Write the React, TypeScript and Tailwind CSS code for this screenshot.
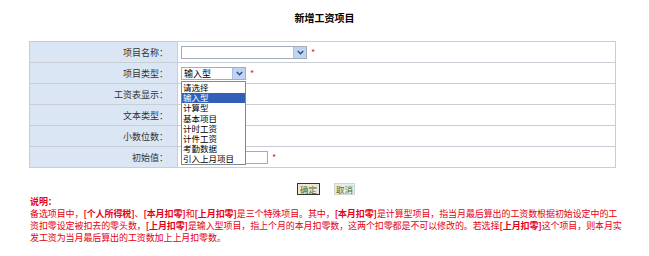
import React from "react";

const rows = ["项目名称：", "项目类型：", "工资表显示：", "文本类型：", "小数位数：", "初始值："];

const options = ["请选择", "输入型", "计算型", "基本项目", "计时工资", "计件工资", "考勤数据", "引入上月项目"];

const Arrow = () => (
  <div className="flex h-full w-[13px] items-center justify-center border-l border-[#a9bfe6] bg-[#c2d3f2]">
    <svg width="7" height="5" viewBox="0 0 7 5">
      <path d="M0.8 1 L3.5 3.8 L6.2 1" fill="none" stroke="#2b4c8c" strokeWidth="1.4" />
    </svg>
  </div>
);

const Star = () => <span className="ml-[4px] text-[9px] leading-none text-[#e8232a]">*</span>;

const App: React.FC = () => {
  return (
    <div
      className="relative h-[256px] w-[649px] overflow-hidden bg-white text-[9px] text-[#333]"
      style={{ fontFamily: '"Noto Sans CJK SC", "Noto Sans", sans-serif' }}
    >
      {/* 标题 */}
      <div className="flex h-[41px] items-start justify-center pt-[12px] text-[10px] font-bold leading-[12px] text-black">
        新增工资项目
      </div>

      {/* 表单 */}
      <div className="ml-[29px] w-[587px] border-t border-[#c9ced6]">
        {rows.map((label, i) => (
          <div key={label} className="flex h-[21px] border-x border-b border-[#c9ced6]">
            <div className="flex w-[148px] items-center justify-end border-r border-[#c9ced6] bg-[#dbe6f5] pr-[9px] leading-none">
              {label}
            </div>
            <div className="relative flex flex-1 items-center pl-[3px]">
              {i === 0 && (
                <>
                  <div className="flex h-[13px] w-[126px] items-stretch justify-end border border-[#a5acb5] bg-white">
                    <Arrow />
                  </div>
                  <Star />
                </>
              )}
              {i === 1 && (
                <>
                  <div className="flex h-[13px] w-[65px] items-stretch border border-[#a5acb5] bg-white">
                    <span className="flex flex-1 items-center pl-[2px] leading-none text-black">输入型</span>
                    <Arrow />
                  </div>
                  <Star />
                  {/* 下拉列表 */}
                  <div className="absolute left-[3px] top-[18px] z-10 flex w-[65px] flex-col border border-[#7f8a99] bg-white py-[0.5px]">
                    {options.map((o) => (
                      <div
                        key={o}
                        className={
                          o === "输入型"
                            ? "flex h-[10.1px] items-center overflow-hidden bg-[#3160b8] pl-[1px] text-[8.5px] leading-none text-white"
                            : "flex h-[10.1px] items-center overflow-hidden pl-[1px] text-[8.5px] leading-none text-black"
                        }
                      >
                        {o}
                      </div>
                    ))}
                  </div>
                </>
              )}
              {i === 5 && (
                <>
                  <div className="h-[13px] w-[87px] border border-[#a5acb5] bg-white" />
                  <Star />
                </>
              )}
            </div>
          </div>
        ))}
      </div>

      {/* 按钮 */}
      <div className="mt-[15px] flex justify-center gap-[14px] pl-[3px]">
        <button className="flex h-[12px] w-[23px] items-center justify-center border border-[#333] bg-[#e9e8dc] text-[8.5px] leading-none text-[#4d6b1e]">
          确定
        </button>
        <button className="flex h-[12px] w-[21px] items-center justify-center border border-[#d4d4cc] bg-[#ecebe2] text-[8.5px] leading-none text-[#4d6b1e]">
          取消
        </button>
      </div>

      {/* 说明 */}
      <div className="ml-[30px] mt-[1px] text-[9px] leading-[12px] tracking-[-0.1px] text-[#e60012]">
        <div className="font-bold">说明：</div>
        <div className="whitespace-nowrap">
          备选项目中，<b>[个人所得税]</b>、<b>[本月扣零]</b>和<b>[上月扣零]</b>是三个特殊项目。其中，<b>[本月扣零]</b>是计算型项目，指当月最后算出的工资数根据初始设定中的工
        </div>
        <div className="whitespace-nowrap">
          资扣零设定被扣去的零头数，<b>[上月扣零]</b>是输入型项目，指上个月的本月扣零数，这两个扣零都是不可以修改的。若选择<b>[上月扣零]</b>这个项目，则本月实
        </div>
        <div className="whitespace-nowrap">发工资为当月最后算出的工资数加上上月扣零数。</div>
      </div>
    </div>
  );
};

export default App;
